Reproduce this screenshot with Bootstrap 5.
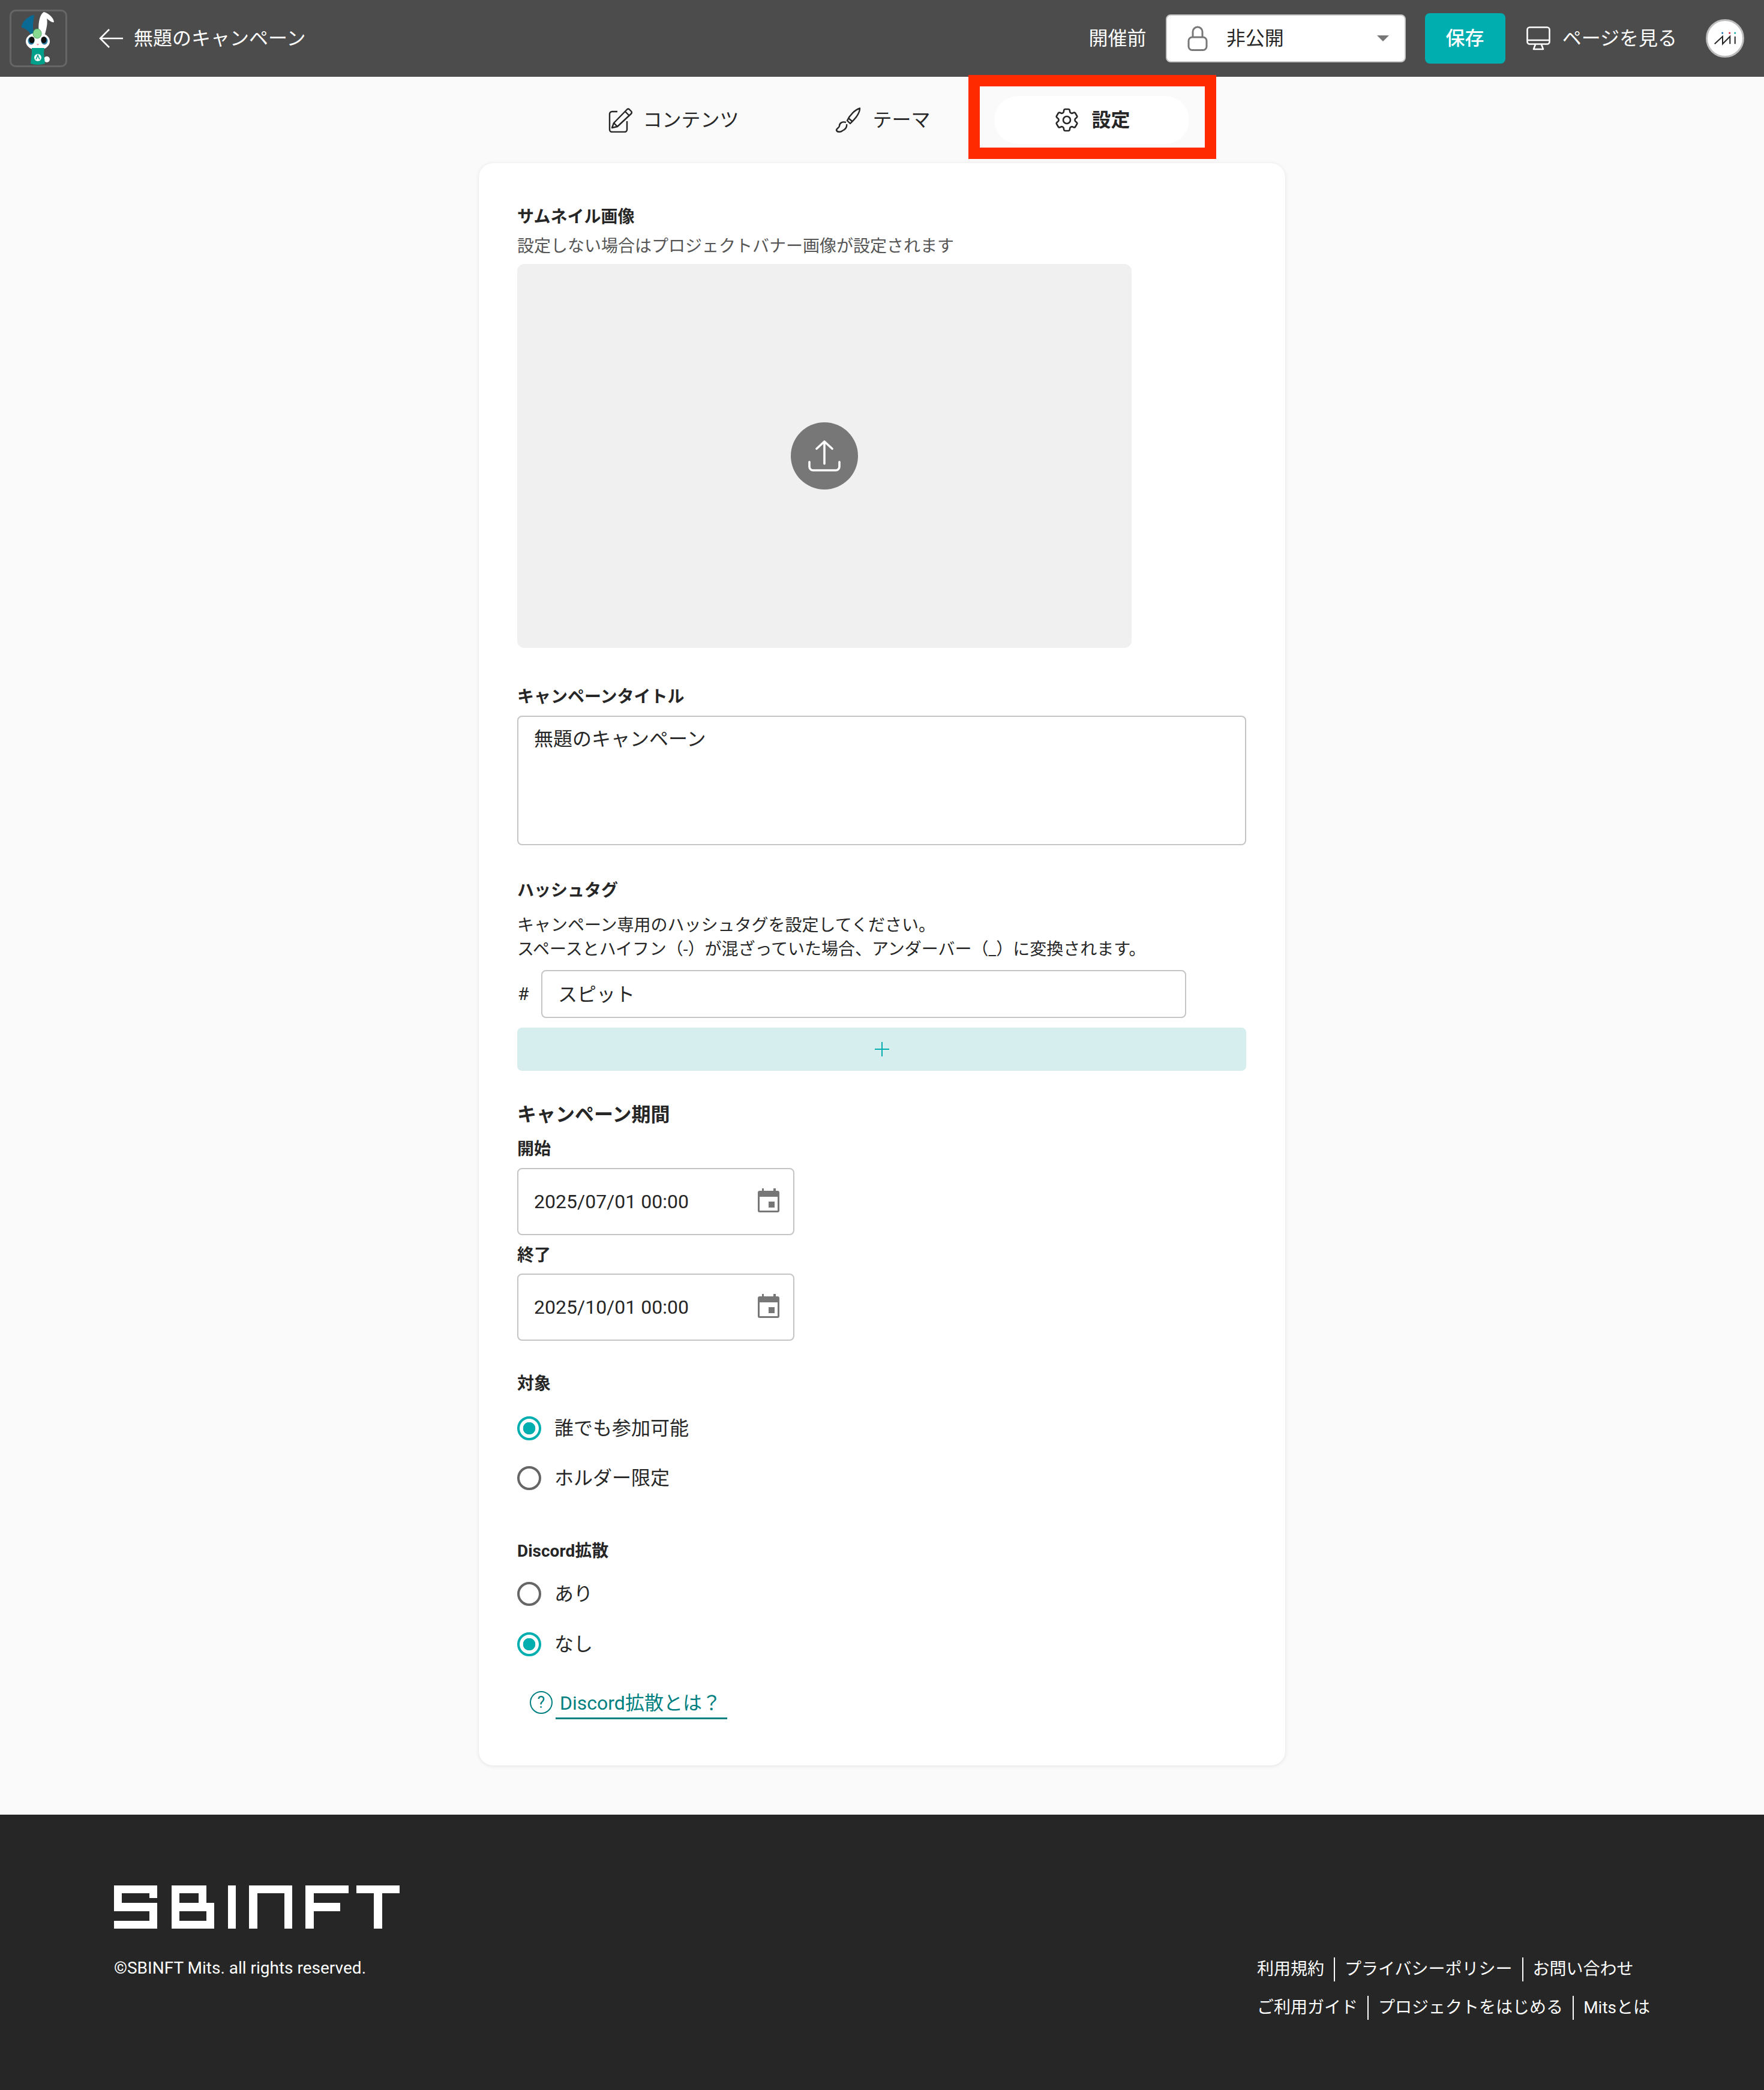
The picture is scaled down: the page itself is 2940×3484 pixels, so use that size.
<!DOCTYPE html>
<html lang="ja">
<head>
    <meta charset="UTF-8">
    <meta name="viewport" content="width=device-width, initial-scale=1.0">
    <title>無題のキャンペーン</title>
    <link href="https://cdn.jsdelivr.net/npm/bootstrap@5.3.0/dist/css/bootstrap.min.css" rel="stylesheet">
    <script src="https://cdn.jsdelivr.net/npm/bootstrap@5.3.0/dist/js/bootstrap.bundle.min.js"></script>
    <style>
        body {
            font-family: Roboto, "Noto Sans CJK JP", sans-serif;
            font-size: 28px;
            line-height: 40px;
            color: #262626;
            background: #fafafa;
        }

        /* header */
        .top-bar { height: 128px; background: #4c4c4c; color: #fff; padding: 0 33px 0 16px; }
        .brand-box { width: 96px; height: 96px; border: 3px solid #666; border-radius: 10px; }
        .back-link { color: #fff; font-size: 32px; text-decoration: none; margin-left: 53px; gap: 18px; }
        .status-text { font-size: 32px; margin-right: 32px; }
        .status-select { width: 400px; height: 80px; background: #fff; border: 2px solid #c4c4c4; border-radius: 8px; color: #262626; font-size: 32px; padding: 0 26px 0 34px; gap: 31px; }
        .status-caret { width: 0; height: 0; border-left: 10px solid transparent; border-right: 10px solid transparent; border-top: 10px solid #777; margin-left: auto; }
        .save-btn { width: 134px; height: 84px; margin-left: 32px; background: #00aeb0; color: #fff; border: 0; border-radius: 8px; font-size: 32px; font-weight: 500; padding: 0; }
        .preview-link { color: #fff; font-size: 32px; text-decoration: none; margin-left: 35px; gap: 20px; }
        .user-chip { width: 64px; height: 64px; margin-left: 48px; }

        /* tabs */
        .tab-row { padding-top: 32px; gap: 24px; }
        .tab-item { position: relative; width: 325px; height: 80px; border-radius: 40px; color: #262626; font-size: 32px; text-decoration: none; gap: 21px; }
        .tab-item.is-active { background: #fff; font-weight: 700; padding-left: 4px; }
        .tab-content { gap: 17px; padding-left: 4px; }
        .tab-theme { gap: 19px; padding-left: 2px; }
        .mark-box { position: absolute; left: -43px; right: -45px; top: -35px; bottom: -25px; border: 19px solid #ff2a00; pointer-events: none; }

        /* form card */
        .form-panel { width: 1344px; margin: 32px auto 82px; padding: 70px 65px 77px 64px; background: #fff; border-radius: 24px; box-shadow: 0 1px 6px rgba(0, 0, 0, .1); }
        .field-label { font-size: 28px; font-weight: 700; margin: 0; line-height: 40px; }
        .hint-text { color: #555; margin-top: 9px; }
        .upload-area { width: 1024px; height: 640px; margin-top: 9px; background: #f0f0f0; border-radius: 12px; }
        .upload-btn { width: 112px; height: 112px; background: #777; border-radius: 50%; }
        .form-panel .form-control { font-size: 32px; line-height: 40px; color: #262626; border: 2px solid #c4c4c4; border-radius: 8px; padding: 15px 26px; box-shadow: none; }
        .form-panel .title-input { height: 216px; margin-top: 11px; padding-top: 17px; resize: none; }
        .tag-row { margin-top: 14px; }
        .hash-mark { width: 40px; padding-left: 1px; font-size: 30px; }
        .form-panel .tag-input { width: 1075px; height: 80px; padding: 11px 26px 15px; }
        .add-btn { display: flex; align-items: center; justify-content: center; width: 100%; height: 72px; margin-top: 16px; background: #d6eeee; border: 0; border-radius: 8px; padding: 0; }
        .section-title { font-size: 32px; font-weight: 700; line-height: 44px; margin: 51px 0 0; }
        .date-wrap { position: relative; width: 462px; height: 112px; }
        .form-panel .date-input { height: 112px; }
        .date-icon { position: absolute; right: 25px; top: 34px; }
        .radio-row { min-height: 0; height: 64px; padding: 0; margin: 0; gap: 22px; font-size: 32px; }
        .radio-row .form-check-input { float: none; width: 40px; height: 40px; margin: 0; background-color: #fff; border: 4px solid #666; box-shadow: none; }
        .radio-row .form-check-input:checked { border-color: #00aeb0; background-color: #fff; background-image: radial-gradient(circle, #00aeb0 10px, transparent 10.6px); }
        .radio-row label { line-height: 40px; }
        .help-row { margin-top: 46px; padding-left: 21px; gap: 5px; }
        .help-icon { width: 38px; height: 38px; border: 2.5px solid #007f80; border-radius: 50%; color: #007f80; font-size: 27px; line-height: 1; }
        .help-link { font-size: 32px; color: #007f80; text-decoration: none; padding: 0 10px 4px 7px; border-bottom: 3px solid #007f80; }

        /* footer */
        .site-footer { height: 460px; background: #262626; color: #fff; padding: 118px 190px 0; }
        .copy-text { margin-top: 46px; }
        .foot-links { margin-top: 120px; gap: 24px; }
        .foot-links a { color: #fff; text-decoration: none; padding: 0 16px; border-right: 2px solid #fff; }
        .foot-links a:first-child { padding-left: 0; }
        .foot-links a:last-child { border-right: 0; padding-right: 0; }
    </style>
</head>
<body>
    <header class="top-bar d-flex align-items-center">
        <div class="brand-box flex-shrink-0">
            <svg width="90" height="90" viewBox="3 3 90 90" role="img" aria-label="mascot">
                <path d="M41 40C37 30 40 17 41 9C31 10 19 22 20 30C26 31 32 35 36 43Z" fill="#0b6a94"/>
                <path d="M49 38C47 24 50 8 57 4C66 6 74 15 74 21C70 22 65 17 62 15C64 23 61 33 59 41Z" fill="#fff"/>
                <ellipse cx="47" cy="53" rx="20" ry="15" fill="#fff"/>
                <ellipse cx="36" cy="52" rx="5.500" ry="6.500" fill="#2a7ea6"/>
                <ellipse cx="58" cy="52" rx="5.500" ry="6.500" fill="#2a7ea6"/>
                <ellipse cx="37" cy="50.500" rx="4.500" ry="5.500" fill="#111"/>
                <ellipse cx="57" cy="50.500" rx="4.500" ry="5.500" fill="#111"/>
                <path d="M45 57h4l-2 3z" fill="#e88a9c"/>
                <ellipse cx="46" cy="40" rx="7" ry="8" fill="#86d98f" stroke="#3b8f53" stroke-width=".8"/>
                <circle cx="62" cy="83" r="5" fill="#fff"/>
                <path d="M37 64H58L57 72L59 90Q47 94 35 90L37 72Z" fill="#00a08a"/>
                <circle cx="47" cy="80" r="6" fill="#fff"/>
                <path d="M44 83L47 76L50 83" fill="none" stroke="#00a08a" stroke-width="1.500"/>
            </svg>
        </div>
        <a class="back-link d-flex align-items-center" href="#">
            <svg width="40" height="32" viewBox="0 0 40 32" fill="none" stroke="#fff" stroke-width="2.600"><path d="M17 1L2 16L17 31M2 16H40"/></svg>
            無題のキャンペーン
        </a>
        <span class="status-text ms-auto">開催前</span>
        <div class="status-select d-flex align-items-center">
            <svg width="34" height="42" viewBox="0 0 34 42" fill="none" stroke="#777" stroke-width="3"><path d="M9 20V10a8 8 0 0 1 16 0V20"/><rect x="2" y="19" width="30" height="21.500" rx="6"/></svg>
            <span>非公開</span>
            <span class="status-caret"></span>
        </div>
        <button type="button" class="btn save-btn">保存</button>
        <a class="preview-link d-flex align-items-center" href="#">
            <svg width="40" height="40" viewBox="0 0 40 40" fill="none" stroke="#fff" stroke-width="2.600" stroke-linejoin="round"><rect x="1.500" y="1.500" width="37" height="28" rx="4"/><path d="M1.500 23H38.500M15 30L12 38H28L25 30"/></svg>
            ページを見る
        </a>
        <svg class="user-chip flex-shrink-0" viewBox="-32 -32 64 64" role="img" aria-label="user">
            <circle r="30.500" fill="#fff" stroke="#bdbdbd" stroke-width="3"/>
            <path d="M-17.300 9.300L-4 -3.300V9.300L8.300 -3.300V9.300M16.700 -3.300V9.300" fill="none" stroke="#262626" stroke-width="2"/>
            <circle cx="-4.300" cy="-9" r="1.500" fill="#0b6fa8"/>
            <circle cx="7.700" cy="-9" r="1.500" fill="#e0203a"/>
            <circle cx="16.700" cy="-9" r="1.500" fill="#00a8a0"/>
        </svg>
    </header>

    <nav class="tab-row d-flex justify-content-center">
        <a class="tab-item tab-content d-flex align-items-center justify-content-center" href="#">
            <svg width="40" height="41" viewBox="0 0 40 41" fill="none" stroke="#262626" stroke-width="2.400" stroke-linejoin="round"><path d="M15 6H6a4 4 0 0 0-4 4V36a4 4 0 0 0 4 4H27a4 4 0 0 0 4-4V22"/><path d="M6 33L9 25L31 2.500a3 3 0 0 1 4 0L38 5.500a3 3 0 0 1 0 4L15 31ZM9 25L15 31M28 6L35 13"/></svg>
            コンテンツ
        </a>
        <a class="tab-item tab-theme d-flex align-items-center justify-content-center" href="#">
            <svg width="44" height="42" viewBox="0 0 44 42" fill="none" stroke="#262626" stroke-width="2.400" stroke-linejoin="round"><path d="M42 1.500C34 4 25 13 21 22L26 27C33 20 42 11 42 1.500Z"/><path d="M23 18L29 23"/><path d="M19 25C13 23 8 26 8 31C8 34 3 35 3 38C4 41 9 42 13 39C17 37 21 33 20 28"/></svg>
            テーマ
        </a>
        <a class="tab-item is-active d-flex align-items-center justify-content-center" href="#">
            <svg width="40" height="40" viewBox="2 2 20 20" fill="none" stroke="#262626" stroke-width="1.300" stroke-linejoin="round"><path d="M9.594 3.940c.09-.542.56-.94 1.110-.94h2.593c.55 0 1.020.398 1.110.94l.213 1.281c.063.374.313.686.645.870.074.040.147.083.220.127.325.196.72.257 1.075.124l1.217-.456a1.125 1.125 0 0 1 1.370.490l1.296 2.247a1.125 1.125 0 0 1-.26 1.431l-1.003.827c-.293.241-.438.613-.43.992a7.723 7.723 0 0 1 0 .255c-.008.378.137.75.43.991l1.004.827c.424.35.534.955.26 1.430l-1.298 2.247a1.125 1.125 0 0 1-1.369.491l-1.217-.456c-.355-.133-.75-.072-1.076.124a6.470 6.470 0 0 1-.22.128c-.331.183-.581.495-.644.869l-.213 1.281c-.09.543-.56.94-1.110.94h-2.594c-.55 0-1.019-.398-1.110-.94l-.213-1.281c-.062-.374-.312-.686-.644-.87a6.520 6.520 0 0 1-.22-.127c-.325-.196-.72-.257-1.076-.124l-1.217.456a1.125 1.125 0 0 1-1.369-.49l-1.297-2.247a1.125 1.125 0 0 1 .26-1.431l1.004-.827c.292-.24.437-.613.43-.991a6.932 6.932 0 0 1 0-.255c.007-.38-.138-.751-.43-.992l-1.004-.827a1.125 1.125 0 0 1-.26-1.430l1.297-2.247a1.125 1.125 0 0 1 1.370-.491l1.216.456c.356.133.751.072 1.076-.124.072-.044.146-.086.22-.128.332-.183.582-.495.644-.869l.214-1.280Z"/><circle cx="12" cy="12" r="3"/></svg>
            設定
            <span class="mark-box"></span>
        </a>
    </nav>

    <main class="form-panel">
        <p class="field-label">サムネイル画像</p>
        <div class="hint-text">設定しない場合はプロジェクトバナー画像が設定されます</div>
        <div class="upload-area d-flex align-items-center justify-content-center">
            <div class="upload-btn d-flex align-items-center justify-content-center">
                <svg width="56" height="56" viewBox="0 0 56 56" fill="none" stroke="#fff" stroke-width="3.600" stroke-linecap="round" stroke-linejoin="round"><path d="M28 4V41M15 16L28 4L41 16"/><path d="M3 38V46a6 6 0 0 0 6 6H47a6 6 0 0 0 6-6V38"/></svg>
            </div>
        </div>

        <p class="field-label" style="margin-top: 62px">キャンペーンタイトル</p>
        <textarea class="form-control title-input">無題のキャンペーン</textarea>

        <p class="field-label" style="margin-top: 56px">ハッシュタグ</p>
        <div style="margin-top: 18px">キャンペーン専用のハッシュタグを設定してください。<br>スペースとハイフン（-）が混ざっていた場合、アンダーバー（_）に変換されます。</div>
        <div class="tag-row d-flex align-items-center">
            <span class="hash-mark">#</span>
            <input type="text" class="form-control tag-input" value="スピット">
        </div>
        <button type="button" class="btn add-btn" aria-label="追加">
            <svg width="26" height="26" viewBox="0 0 26 26" stroke="#00aeb0" stroke-width="2"><path d="M13 1V25M1 13H25"/></svg>
        </button>

        <h2 class="section-title">キャンペーン期間</h2>
        <p class="field-label" style="margin-top: 16px">開始</p>
        <div class="date-wrap" style="margin-top: 11px">
            <input type="text" class="form-control date-input" value="2025/07/01 00:00">
            <svg class="date-icon" width="36" height="40" viewBox="0 0 36 40" fill="#777" fill-rule="evenodd"><path d="M7 0H10V4H26V0H30V4H33a3 3 0 0 1 3 3V37a3 3 0 0 1-3 3H3a3 3 0 0 1-3-3V7a3 3 0 0 1 3-3H7ZM3 14V37H33V14ZM18 22H28V32H18Z"/></svg>
        </div>
        <p class="field-label" style="margin-top: 14px">終了</p>
        <div class="date-wrap" style="margin-top: 10px">
            <input type="text" class="form-control date-input" value="2025/10/01 00:00">
            <svg class="date-icon" width="36" height="40" viewBox="0 0 36 40" fill="#777" fill-rule="evenodd"><path d="M7 0H10V4H26V0H30V4H33a3 3 0 0 1 3 3V37a3 3 0 0 1-3 3H3a3 3 0 0 1-3-3V7a3 3 0 0 1 3-3H7ZM3 14V37H33V14ZM18 22H28V32H18Z"/></svg>
        </div>

        <p class="field-label" style="margin-top: 52px">対象</p>
        <div class="d-flex flex-column" style="margin-top: 22px; gap: 19px">
            <div class="form-check radio-row d-flex align-items-center">
                <input class="form-check-input" type="radio" name="target" id="targetAll" checked>
                <label for="targetAll">誰でも参加可能</label>
            </div>
            <div class="form-check radio-row d-flex align-items-center">
                <input class="form-check-input" type="radio" name="target" id="targetHolder">
                <label for="targetHolder">ホルダー限定</label>
            </div>
        </div>

        <p class="field-label" style="margin-top: 70px">Discord拡散</p>
        <div class="d-flex flex-column" style="margin-top: 19px; gap: 20px">
            <div class="form-check radio-row d-flex align-items-center">
                <input class="form-check-input" type="radio" name="discord" id="discordOn">
                <label for="discordOn">あり</label>
            </div>
            <div class="form-check radio-row d-flex align-items-center">
                <input class="form-check-input" type="radio" name="discord" id="discordOff" checked>
                <label for="discordOff">なし</label>
            </div>
        </div>

        <div class="help-row d-flex align-items-start">
            <span class="help-icon d-flex align-items-center justify-content-center flex-shrink-0">?</span>
            <a class="help-link" href="#">Discord拡散とは？</a>
        </div>
    </main>

    <footer class="site-footer d-flex justify-content-between align-items-start">
        <div>
            <svg class="d-block" width="476" height="72" viewBox="0 0 476 72" fill="#fff" role="img" aria-label="SBINFT">
                <path d="M0 0H72V21H59V13H13V29H72V72H0V59H59V43H0Z"/>
                <path fill-rule="evenodd" d="M96 0H154V29H167V72H96ZM109 13V29H141V13ZM109 43V59H154V43Z"/>
                <path d="M190 0H203V72H190Z"/>
                <path d="M225 0H297V72H284V13H239V72H225Z"/>
                <path d="M319 0H391V13H333V29H377V43H333V72H319Z"/>
                <path d="M404 0H476V13H447V72H433V13H404Z"/>
            </svg>
            <div class="copy-text">©SBINFT Mits. all rights reserved.</div>
        </div>
        <div class="foot-links d-flex flex-column">
            <div class="d-flex">
                <a href="#">利用規約</a>
                <a href="#">プライバシーポリシー</a>
                <a href="#">お問い合わせ</a>
            </div>
            <div class="d-flex">
                <a href="#">ご利用ガイド</a>
                <a href="#">プロジェクトをはじめる</a>
                <a href="#">Mitsとは</a>
            </div>
        </div>
    </footer>
</body>
</html>
